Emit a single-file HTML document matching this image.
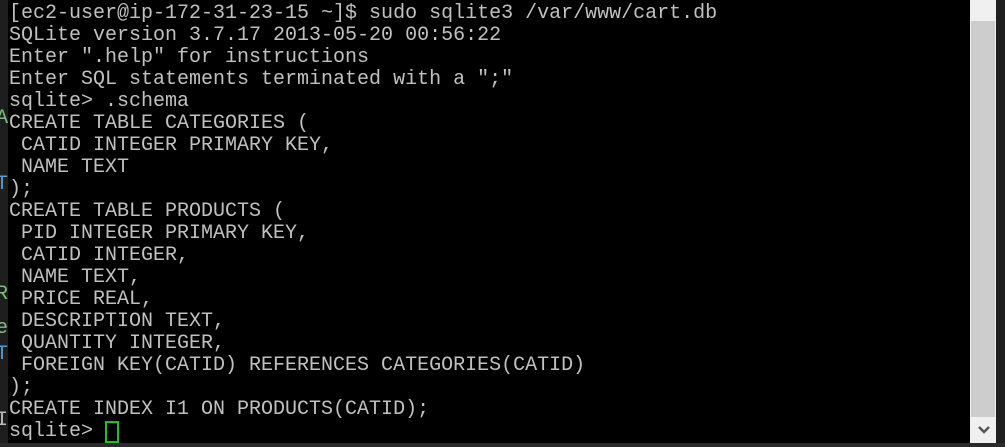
<!DOCTYPE html>
<html><head><style>
html,body{margin:0;padding:0;width:1005px;height:447px;overflow:hidden;background:#1e1e1e;}
#left{position:absolute;left:0;top:0;width:8px;height:447px;background:#1e1e1e;overflow:hidden;font:20px "Liberation Mono",monospace;line-height:22px;}
#term{position:absolute;left:8px;top:0;width:962px;height:443px;background:#000;overflow:hidden;}
pre{margin:0;position:absolute;left:1px;top:3px;font:20px "Courier New","Nimbus Mono PS","Liberation Mono",monospace;line-height:22px;color:#c0c0c0;}
#cur{position:absolute;left:97px;top:421px;width:10px;height:18px;border:2px solid #22c022;}
#sb{position:absolute;left:970px;top:0;width:26px;height:443px;background:#f0f0f0;}
#thumb{position:absolute;left:971px;top:21px;width:24px;height:396px;background:#cdcdcd;}
#arrow{position:absolute;left:977px;top:424px;}
#rb{position:absolute;left:996px;top:0;width:9px;height:447px;background:#1f1f1f;}
#bb{position:absolute;left:0;top:443px;width:1005px;height:4px;background:#2a2a2a;}
</style></head><body>
<div id="left">
<div style="position:absolute;left:-4px;top:108px;color:#7fbf7f">A</div>
<div style="position:absolute;left:-4px;top:174px;color:#569cd6">T</div>
<div style="position:absolute;left:-4px;top:284px;color:#7fbf7f">R</div>
<div style="position:absolute;left:-4px;top:318px;color:#7fbf7f">e</div>
<div style="position:absolute;left:-4px;top:344px;color:#569cd6">T</div>
<div style="position:absolute;left:-4px;top:410px;color:#bbb">I</div>
</div>
<div id="term"><pre>[ec2-user@ip-172-31-23-15 ~]$ sudo sqlite3 /var/www/cart.db
SQLite version 3.7.17 2013-05-20 00:56:22
Enter ".help" for instructions
Enter SQL statements terminated with a ";"
sqlite&gt; .schema
CREATE TABLE CATEGORIES (
 CATID INTEGER PRIMARY KEY,
 NAME TEXT
);
CREATE TABLE PRODUCTS (
 PID INTEGER PRIMARY KEY,
 CATID INTEGER,
 NAME TEXT,
 PRICE REAL,
 DESCRIPTION TEXT,
 QUANTITY INTEGER,
 FOREIGN KEY(CATID) REFERENCES CATEGORIES(CATID)
);
CREATE INDEX I1 ON PRODUCTS(CATID);
sqlite&gt; </pre><div id="cur"></div></div>
<div id="sb"></div><div id="thumb"></div>
<svg id="arrow" width="14" height="12" viewBox="0 0 14 12"><path d="M2 3 L7 8 L12 3" stroke="#555" stroke-width="2.5" fill="none"/></svg>
<div id="rb"></div><div id="bb"></div>
</body></html>
